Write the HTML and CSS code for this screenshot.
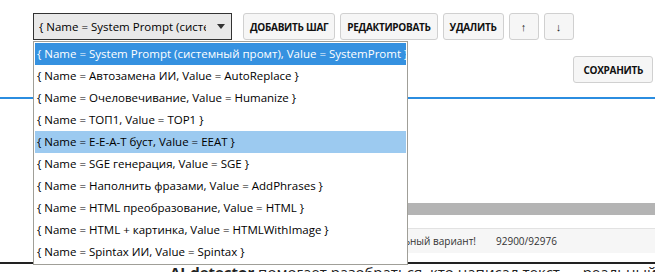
FILE: index.html
```html
<!DOCTYPE html>
<html lang="ru">
<head>
  <meta charset="UTF-8">
  <meta name="viewport" content="width=device-width, initial-scale=1.0">
  <title>Шаги обработки</title>
  <link rel="stylesheet" href="styles.css">
</head>
<body>
  <div class="toolbar">
    <div class="combo">
      <span class="combo-text">{ Name = System Prompt (системный промт), Value = SystemPromt }</span>
      <span class="combo-arrow"></span>
    </div>
    <button class="btn first">ДОБАВИТЬ ШАГ</button>
    <button class="btn">РЕДАКТИРОВАТЬ</button>
    <button class="btn">УДАЛИТЬ</button>
    <button class="btn arrow">↑</button>
    <button class="btn arrow">↓</button>
  </div>

  <div class="save-row">
    <button class="btn">СОХРАНИТЬ</button>
  </div>

  <div class="divider"></div>

  <div class="content">
    <div class="progress"></div>
    <div class="result-row">
      <span class="result-text">Выбран оптимальный вариант!</span>
      <span class="result-count">92900/92976</span>
    </div>
    <p class="about"><b>AI-detector</b> помогает разобраться, кто написал текст — реальный человек или нейросеть.</p>
  </div>

  <!-- раскрытый список шагов поверх страницы -->
  <ul class="dropdown">
    <li class="selected">{ Name = System Prompt (системный промт), Value = SystemPromt }</li>
    <li>{ Name = Автозамена ИИ, Value = AutoReplace }</li>
    <li>{ Name = Очеловечивание, Value = Humanize }</li>
    <li>{ Name = ТОП1, Value = TOP1 }</li>
    <li class="hover">{ Name = E-E-A-T буст, Value = EEAT }</li>
    <li>{ Name = SGE генерация, Value = SGE }</li>
    <li>{ Name = Наполнить фразами, Value = AddPhrases }</li>
    <li>{ Name = HTML преобразование, Value = HTML }</li>
    <li>{ Name = HTML + картинка, Value = HTMLWithImage }</li>
    <li>{ Name = Spintax ИИ, Value = Spintax }</li>
  </ul>
</body>
</html>
```

FILE: styles.css
```css
body {
  margin: 0;
  font-family: 'Open Sans', 'Noto Sans', sans-serif;
  background: #fff;
  color: #000;
  overflow: hidden;
}
.toolbar {
  display: flex;
  align-items: center;
  padding: 13px 0 0 33px;
  height: 27px;
}
.combo {
  box-sizing: border-box;
  width: 199px;
  height: 27px;
  border: 1px solid #333;
  background: #e9e9e9;
  display: flex;
  align-items: center;
  padding-left: 5px;
  font-size: 11.5px;
}
.combo-text {
  flex: none;
  width: 167px;
  overflow: hidden;
  white-space: nowrap;
}
.combo-arrow {
  margin-left: 11px;
  width: 0;
  height: 0;
  border-left: 4px solid transparent;
  border-right: 4px solid transparent;
  border-top: 5px solid #333;
}
.btn {
  box-sizing: border-box;
  height: 27px;
  margin-left: 5px;
  padding: 0 6px;
  background: #f6f6f6;
  border: 1px solid #d0d0d0;
  border-radius: 3px;
  font-family: 'Open Sans', 'Noto Sans', sans-serif;
  font-size: 10px;
  letter-spacing: -0.3px;
  font-weight: bold;
  color: #111;
}
.btn.first {
  margin-left: 11px;
}
.btn.arrow {
  width: 30px;
  font-size: 11px;
  letter-spacing: 0;
  color: #222;
}
.save-row {
  display: flex;
  justify-content: flex-end;
  padding: 16px 2px 0 0;
}
.save-row .btn {
  padding: 0 9px;
}
.divider {
  margin-top: 14px;
  height: 2px;
  background: #2b8de0;
}
.content {
  padding-top: 104px;
}
.progress {
  margin-left: 60px;
  height: 12px;
  background: #b4b4b4;
}
.result-row {
  margin: 13px 0 0 60px;
  height: 24px;
  border-top: 1px solid #e2e2e2;
  background: #f6f6f6;
  display: flex;
  align-items: center;
  font-size: 10px;
  color: #333;
}
.result-text {
  width: 416px;
  text-align: right;
}
.result-count {
  margin-left: 20px;
}
.about {
  margin: 9px 0 0 0;
  padding: 0 0 0 170px;
  border-top: 2px solid #222;
  font-size: 15px;
  line-height: 17px;
  white-space: nowrap;
  color: #222;
}
.dropdown {
  position: absolute;
  left: 33px;
  top: 41px;
  box-sizing: border-box;
  width: 375px;
  margin: 0;
  padding: 1px;
  list-style: none;
  background: #fff;
  border: 1px solid #a09f98;
  font-size: 11.5px;
}
.dropdown li {
  height: 22px;
  line-height: 22px;
  padding-left: 2px;
  white-space: nowrap;
  overflow: hidden;
}
.dropdown li.selected {
  background: #3591e0;
  color: #fff;
}
.dropdown li.hover {
  background: #9ccaf0;
}
```
